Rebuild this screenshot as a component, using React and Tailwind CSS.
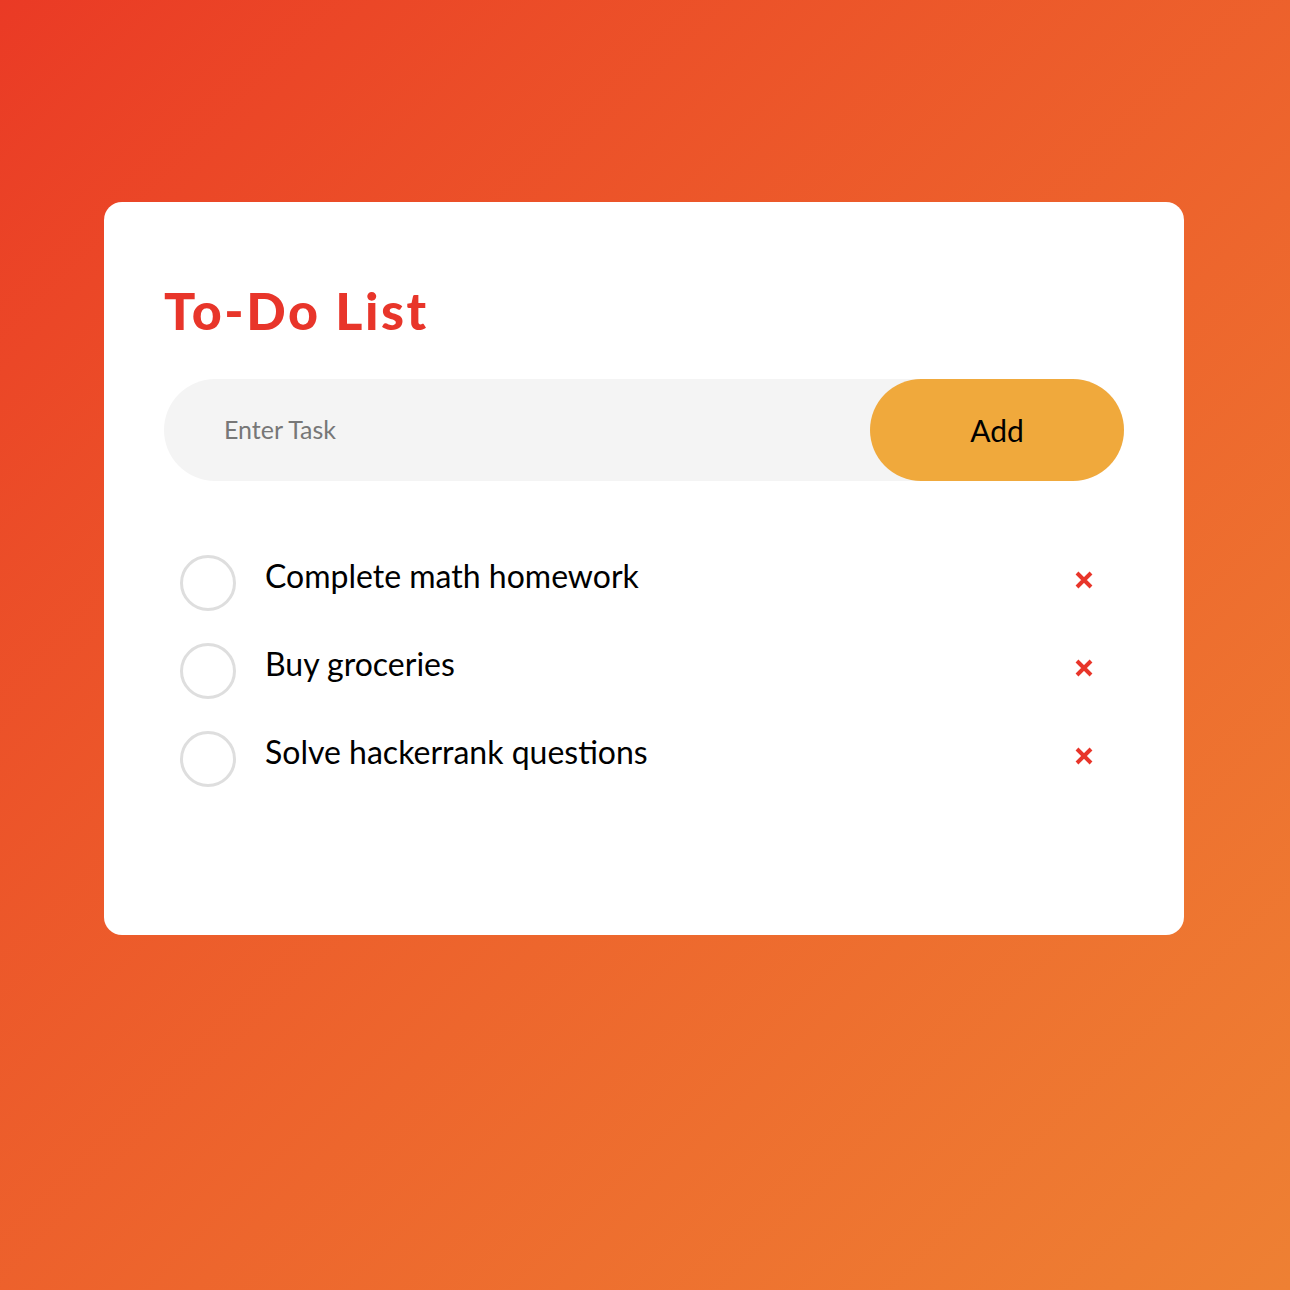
const tasks = ['Complete math homework', 'Buy groceries', 'Solve hackerrank questions']

function Cross() {
  return (
    <svg width="20" height="20" viewBox="0 0 20 20" className="block -mt-[6px]">
      <path d="M3 3 L17 17 M17 3 L3 17" stroke="#E8352A" strokeWidth="4" strokeLinecap="butt" />
    </svg>
  )
}

export default function App() {
  return (
    <div
      className="w-[1290px] h-[1290px] bg-gradient-to-br from-[#EA3A25] to-[#EE8033] pt-[202px] pl-[104px]"
      style={{ fontFamily: 'Lato, "Noto Sans", sans-serif' }}
    >
      <div className="w-[1080px] h-[733px] bg-white rounded-[18px] px-[60px] pt-[82px]">
        <h1 className="text-[52px] leading-none font-black text-[#E8352A] tracking-[2.5px]">To-Do List</h1>

        {/* Input row */}
        <div className="mt-[43px] h-[102px] rounded-full bg-[#F4F4F4] flex items-center">
          <input
            placeholder="Enter Task"
            className="flex-1 h-full bg-transparent pl-[60px] pb-[2px] text-[25px] text-[#333] placeholder:text-[#777] outline-none"
          />
          <button className="w-[254px] h-full rounded-full bg-[#F0A93C] text-[30px] text-black">Add</button>
        </div>

        {/* Tasks */}
        <ul className="mt-[58px]">
          {tasks.map((t) => (
            <li key={t} className="h-[88px] flex items-center pl-[16px] pr-[30px]">
              <span className="w-[56px] h-[56px] rounded-full border-[3px] border-[#DEDEDE] shrink-0" />
              <span className="ml-[29px] flex-1 text-[32px] text-black -mt-[14px]">{t}</span>
              <Cross />
            </li>
          ))}
        </ul>
      </div>
    </div>
  )
}
